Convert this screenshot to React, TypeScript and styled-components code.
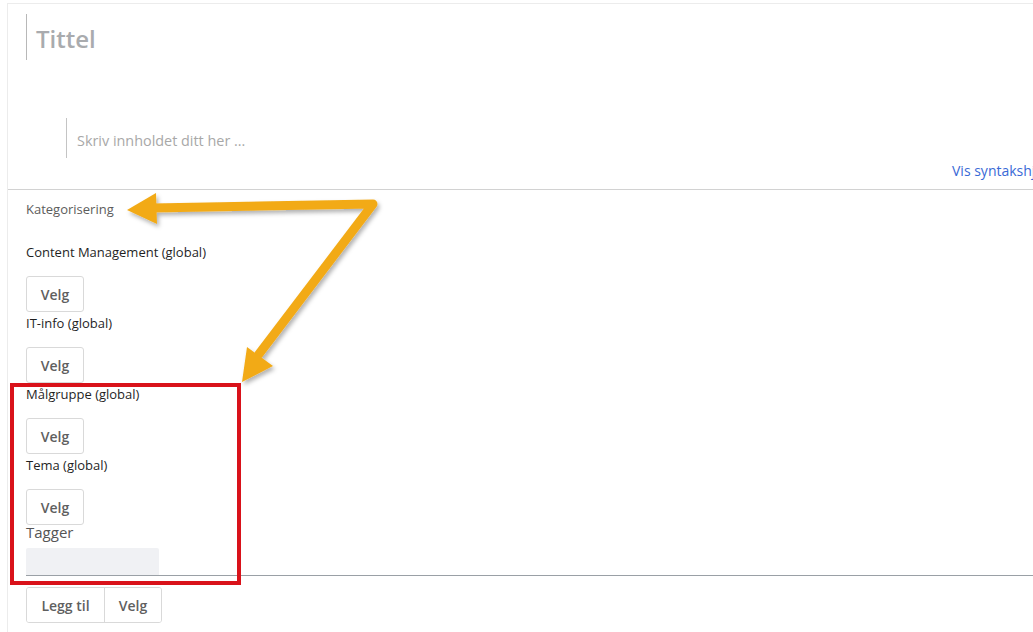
import React from "react";
import styled, { createGlobalStyle } from "styled-components";

const Global = createGlobalStyle`
  html, body { margin: 0; padding: 0; background: #fff; overflow: hidden; }
  body { font-family: "Open Sans", "Liberation Sans", sans-serif; }
`;

const Page = styled.div`
  position: relative;
  width: 1033px;
  height: 632px;
  overflow: hidden;
  padding: 3px 0 0 7px;
  box-sizing: border-box;
`;

const Panel = styled.div`
  width: 1300px;
  min-height: 640px;
  border-top: 1px solid #ececec;
  border-left: 1px solid #ececec;
  display: flex;
  flex-direction: column;
`;

const EditorArea = styled.div`
  display: flex;
  flex-direction: column;
  height: 186px;
  border-bottom: 1px solid #d2d2d2;
  box-sizing: border-box;
  padding-top: 10px;
`;

const TitleField = styled.div`
  margin-left: 18px;
  height: 46px;
  border-left: 1px solid #b8b8b8;
  padding-left: 9px;
  font-size: 24px;
  font-weight: 600;
  line-height: 50px;
  color: #a9abae;
`;

const BodyField = styled.div`
  margin: 58px 0 0 58px;
  height: 40px;
  border-left: 1px solid #c4c4c4;
  padding-left: 10px;
  font-size: 14.4px;
  line-height: 45px;
  color: #a8a8a8;
  overflow: hidden;
`;

const LinkRow = styled.div`
  margin-top: 1px;
  padding-left: 944px;
  white-space: nowrap;
`;

const Link = styled.a`
  font-size: 14px;
  line-height: 20px;
  color: #3a6ad6;
  text-decoration: none;
`;

const Section = styled.div`
  display: flex;
  flex-direction: column;
  padding: 10px 0 0 18px;
`;

const SectionTitle = styled.div`
  font-size: 13px;
  line-height: 18px;
  color: #5c5c5c;
  margin-bottom: 25px;
`;

const Group = styled.div`
  display: flex;
  flex-direction: column;
  align-items: flex-start;
  margin-bottom: 2px;
`;

const Label = styled.div`
  font-size: 13px;
  line-height: 18px;
  color: #1f1f1f;
  margin-bottom: 15px;
`;

const Button = styled.button`
  font-family: "Open Sans", "Liberation Sans", sans-serif;
  font-size: 14px;
  font-weight: 600;
  color: #5f5f5f;
  background: #fff;
  border: 1px solid #d9d9d9;
  border-radius: 3px;
  width: 58px;
  height: 36px;
  padding: 0;
  cursor: pointer;
`;

const TagLabel = styled.div`
  font-size: 15px;
  line-height: 16px;
  color: #555;
  margin: -3px 0 8px;
`;

const TagField = styled.div`
  border-bottom: 1px solid #9aa0a6;
  display: flex;
`;

const TagInput = styled.div`
  width: 133px;
  height: 27px;
  background: #f0f1f4;
  border-radius: 2px 2px 0 0;
`;

const ButtonGroup = styled.div`
  display: flex;
  align-self: flex-start;
  margin-top: 11px;
  border: 1px solid #d9d9d9;
  border-radius: 3px;
  overflow: hidden;
`;

const GroupButton = styled.button<{ $w: number; $divider?: boolean }>`
  font-family: "Open Sans", "Liberation Sans", sans-serif;
  font-size: 14px;
  font-weight: 600;
  color: #5f5f5f;
  background: #fff;
  border: none;
  border-left: ${(p) => (p.$divider ? "1px solid #d9d9d9" : "none")};
  width: ${(p) => p.$w}px;
  height: 34px;
  padding: 0;
  cursor: pointer;
`;

const Highlight = styled.div`
  position: absolute;
  left: 10px;
  top: 383px;
  width: 231px;
  height: 202px;
  border: 4.5px solid #d9121a;
  box-sizing: border-box;
  pointer-events: none;
`;

const Arrows = styled.svg`
  position: absolute;
  left: 0;
  top: 0;
  pointer-events: none;
`;

const groups = [
  "Content Management (global)",
  "IT-info (global)",
  "Målgruppe (global)",
  "Tema (global)",
];

export default function App() {
  const c = "#f2aa17";
  return (
    <>
      <Global />
      <Page>
        <Panel>
          <EditorArea>
            <TitleField>Tittel</TitleField>
            <BodyField>Skriv innholdet ditt her ...</BodyField>
            <LinkRow>
              <Link href="#">Vis syntakshjelp</Link>
            </LinkRow>
          </EditorArea>
          <Section>
            <SectionTitle>Kategorisering</SectionTitle>
            {groups.map((g) => (
              <Group key={g}>
                <Label>{g}</Label>
                <Button>Velg</Button>
              </Group>
            ))}
            <TagLabel>Tagger</TagLabel>
            <TagField>
              <TagInput />
            </TagField>
            <ButtonGroup>
              <GroupButton $w={77}>Legg til</GroupButton>
              <GroupButton $w={57} $divider>
                Velg
              </GroupButton>
            </ButtonGroup>
          </Section>
        </Panel>
        <Highlight />
        <Arrows width="1033" height="632" viewBox="0 0 1033 632">
          <defs>
            <filter id="sh" x="-20%" y="-20%" width="140%" height="140%">
              <feDropShadow dx="2" dy="3" stdDeviation="2" floodColor="#000" floodOpacity="0.3" />
            </filter>
          </defs>
          <g filter="url(#sh)">
            <polyline
              points="152,208 373,204 259,354"
              fill="none"
              stroke={c}
              strokeWidth="9"
              strokeLinejoin="round"
              strokeLinecap="round"
            />
            <polygon points="127,210 156,193 157,224" fill={c} />
            <polygon points="242,382 247,347 273,366" fill={c} />
          </g>
        </Arrows>
      </Page>
    </>
  );
}
